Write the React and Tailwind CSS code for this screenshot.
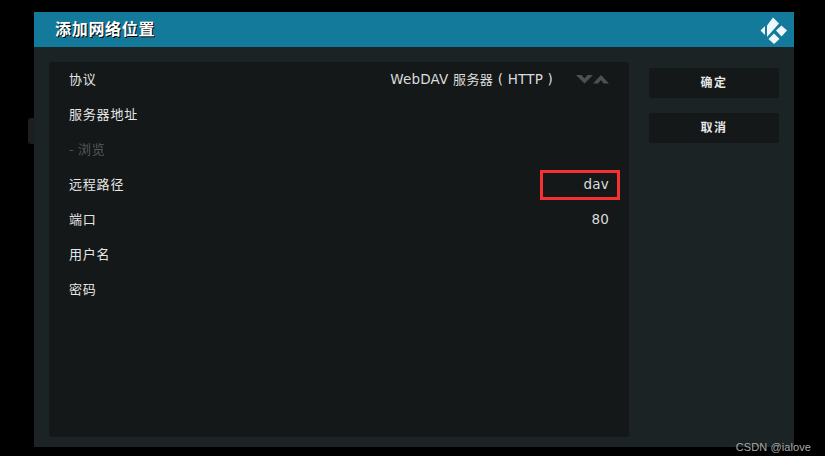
const FONT = "font-['Noto_Sans_CJK_SC','DejaVu_Sans',sans-serif]"

const rows = [
  {
    label: '协议',
    value: (
      <>
        WebDAV <span className="text-[13px] tracking-[0.4px]">服务器</span> ( HTTP )
      </>
    ),
    spinner: true,
  },
  { label: '服务器地址' },
  { label: '- 浏览', dim: true },
  { label: '远程路径', value: 'dav', marked: true },
  { label: '端口', value: '80' },
  { label: '用户名' },
  { label: '密码' },
]

function KodiLogo() {
  return (
    <svg width="36" height="36" viewBox="0 0 36 36" fill="#eef8fb">
      <path d="M4.5 18.5 L9 14 V23 Z" />
      <path d="M11 13.5 L17 5.5 L23 11.5 L11 25 Z" />
      <path d="M25.5 13.5 L31 18.5 L25.5 24.5 L20 18.5 Z" />
      <path d="M18 21.5 L23.5 27 L18 32 L12.5 27 Z" />
    </svg>
  )
}

function Spinner() {
  return (
    <svg width="33" height="10" viewBox="0 0 33 10" fill="#4d5052" className="ml-[23px]">
      <path d="M0 1 H5.5 L8.5 4.5 L11.5 1 H17 L8.5 9.5 Z" />
      <path d="M17 9.5 L25 1 L33 9.5 H27.5 L25 6 L22 9.5 Z" />
    </svg>
  )
}

function Row({ row }) {
  return (
    <div className="h-[35px] flex items-center justify-between pl-[20px] pr-[20px] relative">
      <span className={`-mt-[2.5px] text-[13px] tracking-[0.8px] ${row.dim ? 'text-[#55585a]' : 'text-[#e6e6e6]'}`}>{row.label}</span>
      {row.value && (
        <div className="flex items-center -mt-[1px]">
          <span className="text-[13.5px] tracking-[0.2px] text-[#dcdcdc] font-['DejaVu_Sans','Noto_Sans_CJK_SC',sans-serif]">{row.value}</span>
          {row.spinner && <Spinner />}
        </div>
      )}
      {row.marked && <div className="absolute left-[491px] top-[3px] w-[80px] h-[30px] border-[3px] border-[#f73131]" />}
    </div>
  )
}

function Btn({ children }) {
  return (
    <div className="w-[130px] h-[30px] rounded-[2px] bg-[#141819] flex items-center justify-center pb-[2px] text-[12px] font-bold tracking-[1.4px] text-[#e6e6e6]">
      {children}
    </div>
  )
}

export default function App() {
  return (
    <div className={`relative w-[825px] h-[456px] overflow-hidden bg-black pt-[12px] pl-[34px] ${FONT}`}>
      {/* little tab of the side menu behind the dialog */}
      <div className="absolute left-[28px] top-[118px] w-[6px] h-[26px] rounded-l-[3px] bg-[#1c1e1f]" />

      <div className="w-[760px] h-[435px] bg-[#1b2325] flex flex-col">
        <div className="h-[35px] shrink-0 bg-[#147a9b] flex items-center justify-between pl-[21px] pr-[2px]">
          <span className="-mt-[3px] text-[16px] font-bold tracking-[0.7px] text-white [text-shadow:1px_1px_0_#000]">添加网络位置</span>
          <KodiLogo />
        </div>

        <div className="flex flex-1 pt-[15px] pl-[15px] pb-[10px]">
          <div className="w-[580px] rounded-[2px] bg-[#141819]">
            {rows.map((r) => <Row key={r.label} row={r} />)}
          </div>
          <div className="flex flex-col gap-[15px] ml-[20px] pt-[6px]">
            <Btn>确定</Btn>
            <Btn>取消</Btn>
          </div>
        </div>
      </div>

      <div className="absolute right-[14px] bottom-[1px] text-[11px] tracking-[0.1px] text-[#a9a9a9] font-['Liberation_Sans',sans-serif]">CSDN @ialove</div>
    </div>
  )
}
